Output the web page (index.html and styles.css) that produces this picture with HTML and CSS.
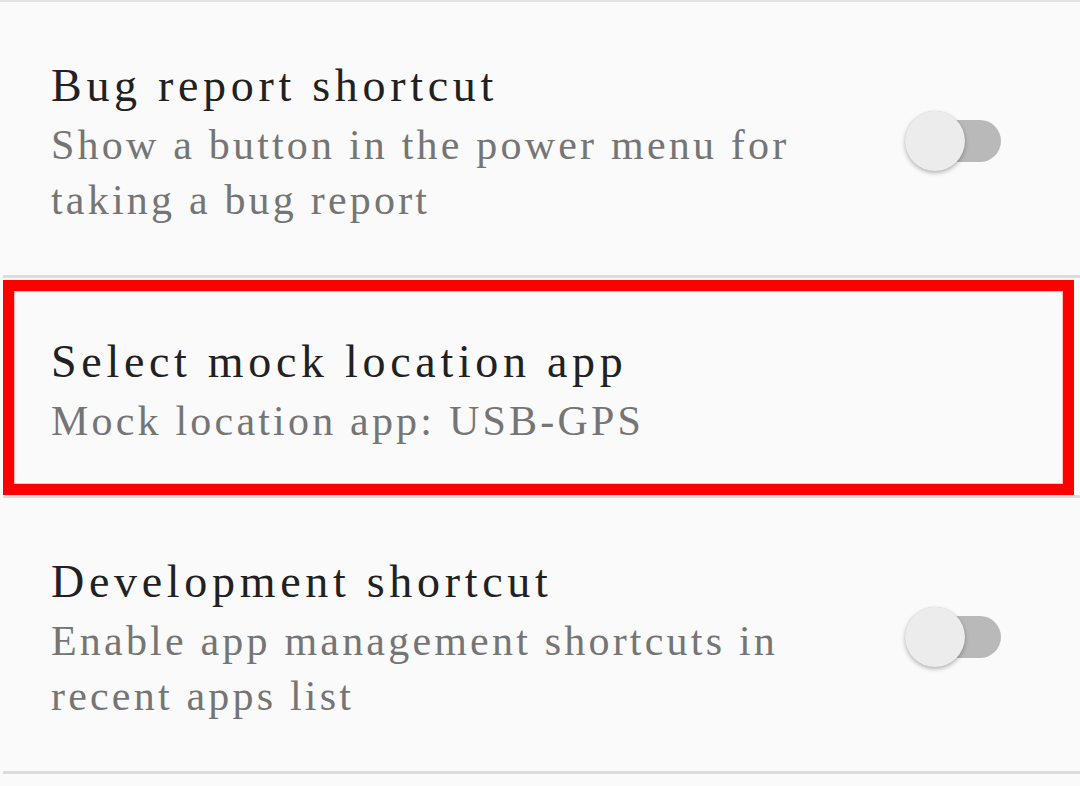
FILE: index.html
```html
<!DOCTYPE html>
<html lang="en">
<head>
<meta charset="utf-8">
<title>Developer options</title>
<link rel="stylesheet" href="styles.css">
</head>
<body>
<div class="list">
  <div class="divider divider-top"></div>
  <div class="pref">
    <div class="pref-text">
      <div class="pref-title">Bug report shortcut</div>
      <div class="pref-summary">Show a button in the power menu for taking a bug report</div>
    </div>
    <div class="switch">
      <span class="switch-track"></span>
      <span class="switch-thumb"></span>
    </div>
  </div>
  <div class="divider"></div>
  <div class="pref pref-highlighted">
    <div class="pref-text">
      <div class="pref-title">Select mock location app</div>
      <div class="pref-summary">Mock location app: USB-GPS</div>
    </div>
    <div class="highlight"></div>
  </div>
  <div class="divider"></div>
  <div class="pref">
    <div class="pref-text">
      <div class="pref-title">Development shortcut</div>
      <div class="pref-summary">Enable app management shortcuts in recent apps list</div>
    </div>
    <div class="switch">
      <span class="switch-track"></span>
      <span class="switch-thumb"></span>
    </div>
  </div>
  <div class="divider"></div>
</div>
</body>
</html>
```

FILE: styles.css
```css
html, body {
  margin: 0;
  padding: 0;
  background: #fafafa;
}

body {
  width: 1080px;
  height: 786px;
  overflow: hidden;
  font-family: "Liberation Serif", "Times New Roman", serif;
}

.list {
  display: flex;
  flex-direction: column;
}

.divider {
  height: 3px;
  margin-left: 3px;
  background: #dcdcdc;
}

.divider-top {
  height: 2px;
  margin-left: 0;
  background: #e2e2e2;
}

.pref {
  position: relative;
  display: flex;
  align-items: center;
  padding: 52px 79px 46.5px 51px;
}

.pref-text {
  flex: 1;
  align-self: flex-start;
  max-width: 800px;
}

.pref-title {
  font-size: 46px;
  line-height: 64px;
  letter-spacing: 4.7px;
  color: #212121;
  white-space: nowrap;
}

.pref-summary {
  font-size: 42px;
  line-height: 55px;
  letter-spacing: 3.2px;
  color: #757575;
}

.switch {
  position: relative;
  width: 96px;
  height: 60px;
  margin-left: auto;
  flex-shrink: 0;
}

.switch-track {
  position: absolute;
  left: 12px;
  right: 0;
  top: 9px;
  height: 42px;
  border-radius: 21px;
  background: #b9b9b9;
}

.switch-thumb {
  position: absolute;
  left: 0;
  top: 0;
  width: 60px;
  height: 60px;
  border-radius: 50%;
  background: #ececec;
  box-shadow: 0 2px 4px rgba(0, 0, 0, 0.28), 0 0 1px rgba(0, 0, 0, 0.12);
}

.highlight {
  position: absolute;
  top: 2px;
  left: 3px;
  right: 6px;
  bottom: 0;
  border: 11px solid #ff0000;
  box-shadow: inset 0 0 0 1px rgba(255, 80, 80, 0.35);
  pointer-events: none;
}
```
